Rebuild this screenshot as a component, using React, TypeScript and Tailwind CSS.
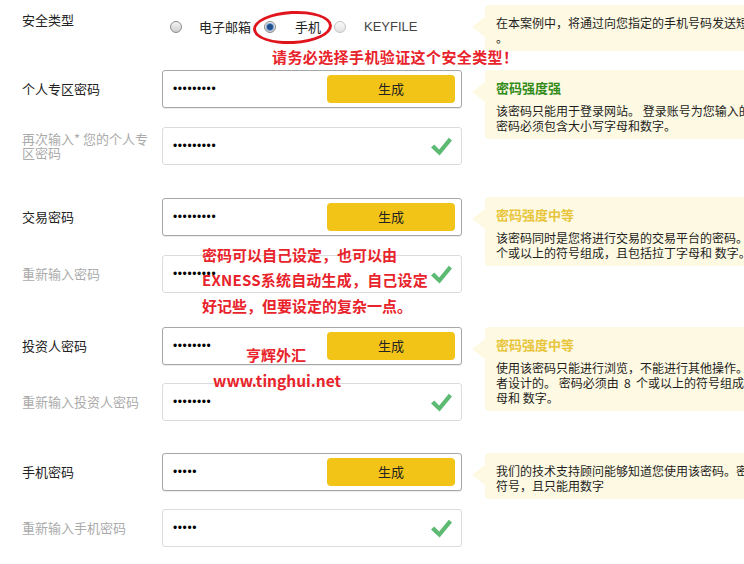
import React from "react";

const cjk = "font-['Noto_Sans_CJK_SC',sans-serif]";

type RadioProps = { checked?: boolean; faded?: boolean };

const Radio = ({ checked, faded }: RadioProps) => (
  <span
    className={
      "flex items-center justify-center w-[12px] h-[12px] rounded-full border bg-linear-to-b " +
      (faded
        ? "border-[#c4c4c4] from-[#fafafa] to-[#e2e2e2]"
        : "border-[#8c8c8c] from-[#f6f6f6] to-[#cdcdcd]")
    }
  >
    {checked && (
      <span className="w-[6px] h-[6px] rounded-full bg-[#1d4f8c] ring-1 ring-[#7fa6d6]" />
    )}
  </span>
);

const Check = () => (
  <svg width="21" height="19" viewBox="0 0 21 19" className="shrink-0">
    <polygon points="0,10.5 3.2,7.6 8.2,12.4 17.8,0.8 21,3.6 8.6,18.6" fill="#5dba73" />
  </svg>
);

type FieldProps = {
  label: string;
  dots: number;
  confirm?: boolean;
};

// one label + password box; the first row of a group has the 生成 button
const Field = ({ label, dots, confirm }: FieldProps) => (
  <div className="flex items-center h-[38px]">
    <div
      className={
        "w-[140px] shrink-0 pr-[8px] text-[13px] leading-[14px] " +
        cjk +
        (confirm ? " text-[#ababab]" : " text-[#222]")
      }
    >
      {label}
    </div>
    <div
      className={
        "w-[300px] shrink-0 h-[38px] flex items-center pl-[10px] pr-[6px] rounded-[3px] border bg-white " +
        (confirm ? "border-[#dcdcdc]" : "border-[#a6a6a6] shadow-[0_1px_1px_rgba(0,0,0,0.08)]")
      }
    >
      <input
        type="password"
        readOnly
        value={"x".repeat(dots)}
        className="flex-1 min-w-0 bg-transparent outline-none text-[12px] tracking-[0.6px] text-black font-['Liberation_Sans',sans-serif]"
      />
      {confirm ? (
        <span className="mr-[3px]">
          <Check />
        </span>
      ) : (
        <button
          className={
            "w-[128px] h-[28px] rounded-[4px] bg-[#f2c418] text-[13px] text-[#222] " + cjk
          }
        >
          生成
        </button>
      )}
    </div>
  </div>
);

type TipProps = {
  title?: string;
  titleColor?: string;
  lines: string[];
  className?: string;
};

const Tip = ({ title, titleColor, lines, className }: TipProps) => (
  <div className={"flex shrink-0 items-start ml-[10px] " + (className ?? "")}>
    <div className="mt-[12px] w-0 h-0 border-y-[10px] border-y-transparent border-r-[13px] border-r-[#fdf9e2]" />
    <div
      className={
        "bg-[#fdf9e2] rounded-[4px] pl-[11px] pr-[40px] pt-[10px] pb-[6px] whitespace-pre text-[12px] leading-[15px] text-[#1e1e1e] " +
        cjk
      }
    >
      {title && (
        <div className={"text-[13px] font-bold mb-[8px] " + titleColor}>{title}</div>
      )}
      {lines.map((l) => (
        <div key={l}>{l}</div>
      ))}
    </div>
  </div>
);

const red = "absolute whitespace-nowrap font-bold text-[#e8232b] " + cjk;

export default function App() {
  return (
    <div className="relative w-[744px] h-[564px] overflow-hidden bg-white pl-[22px]">
      {/* security type */}
      <div className="flex h-[70px] items-start">
        <div className="w-[440px] shrink-0 flex">
          <div className={"w-[140px] shrink-0 mt-[11px] text-[13px] leading-[18px] text-[#222] " + cjk}>
            安全类型
          </div>
          <div
            className={
              "flex items-center shrink-0 whitespace-nowrap h-[18px] mt-[18px] text-[13px] text-[#222] " + cjk
            }
          >
            <span className="ml-[8px]">
              <Radio />
            </span>
            <span className="ml-[17px]">电子邮箱</span>
            <span className="ml-[13px]">
              <Radio checked />
            </span>
            <span className="ml-[19px]">手机</span>
            <span className="ml-[13px]">
              <Radio faded />
            </span>
            <span className="ml-[18px] text-[#444] font-['Liberation_Sans',sans-serif]">KEYFILE</span>
          </div>
        </div>
        <Tip
          className="mt-[5px]"
          lines={["在本案例中，将通过向您指定的手机号码发送短信验证码", "。"]}
        />
      </div>

      {/* personal area */}
      <div className="flex items-start">
        <div className="w-[440px] shrink-0 flex flex-col gap-[19px]">
          <Field label="个人专区密码" dots={9} />
          <Field label="再次输入* 您的个人专区密码" dots={9} confirm />
        </div>
        <Tip
          title="密码强度强"
          titleColor="text-[#338b1c]"
          lines={[
            "该密码只能用于登录网站。 登录账号为您输入的电子邮箱地址，",
            "密码必须包含大小写字母和数字。",
          ]}
        />
      </div>

      {/* trading */}
      <div className="flex items-start mt-[33px]">
        <div className="w-[440px] shrink-0 flex flex-col gap-[19px]">
          <Field label="交易密码" dots={9} />
          <Field label="重新输入密码" dots={9} confirm />
        </div>
        <Tip
          className="-mt-[1px]"
          title="密码强度中等"
          titleColor="text-[#e8c53c]"
          lines={[
            "该密码同时是您将进行交易的交易平台的密码。密码必须由 8",
            "个或以上的符号组成，且包括拉丁字母和 数字。",
          ]}
        />
      </div>

      {/* investor */}
      <div className="flex items-start mt-[34px]">
        <div className="w-[440px] shrink-0 flex flex-col gap-[18px]">
          <Field label="投资人密码" dots={8} />
          <Field label="重新输入投资人密码" dots={8} confirm />
        </div>
        <Tip
          title="密码强度中等"
          titleColor="text-[#e8c53c]"
          lines={[
            "使用该密码只能进行浏览，不能进行其他操作。该密码是为投资",
            "者设计的。 密码必须由  8  个或以上的符号组成，且包括拉丁字",
            "母和 数字。",
          ]}
        />
      </div>

      {/* phone */}
      <div className="flex items-start mt-[32px]">
        <div className="w-[440px] shrink-0 flex flex-col gap-[18px]">
          <Field label="手机密码" dots={5} />
          <Field label="重新输入手机密码" dots={5} confirm />
        </div>
        <Tip
          lines={[
            "我们的技术支持顾问能够知道您使用该密码。密码必须由 5 个以上的",
            "符号，且只能用数字",
          ]}
        />
      </div>

      {/* annotations drawn over the form */}
      <div className="absolute left-[253px] top-[11px] w-[79px] h-[33px] rounded-[50%] border-[3.5px] border-[#e0141c] -rotate-3" />
      <div className={red + " left-[272px] top-[48px] text-[15px] leading-[18px] tracking-[0.4px]"}>
        请务必选择手机验证这个安全类型！
      </div>
      <div className={red + " left-[202px] top-[246px] text-[15px] leading-[18px]"}>
        密码可以自己设定，也可以由
      </div>
      <div className={red + " left-[202px] top-[271px] text-[15px] leading-[18px] tracking-[0.2px]"}>
        EXNESS系统自动生成，自己设定
      </div>
      <div className={red + " left-[202px] top-[297px] text-[15px] leading-[18px]"}>
        好记些，但要设定的复杂一点。
      </div>
      <div className={red + " left-[246px] top-[346px] text-[15px] leading-[18px]"}>
        亨辉外汇
      </div>
      <div className={red + " left-[213px] top-[370px] text-[15.5px] leading-[20px]"}>
        www.tinghui.net
      </div>
    </div>
  );
}
